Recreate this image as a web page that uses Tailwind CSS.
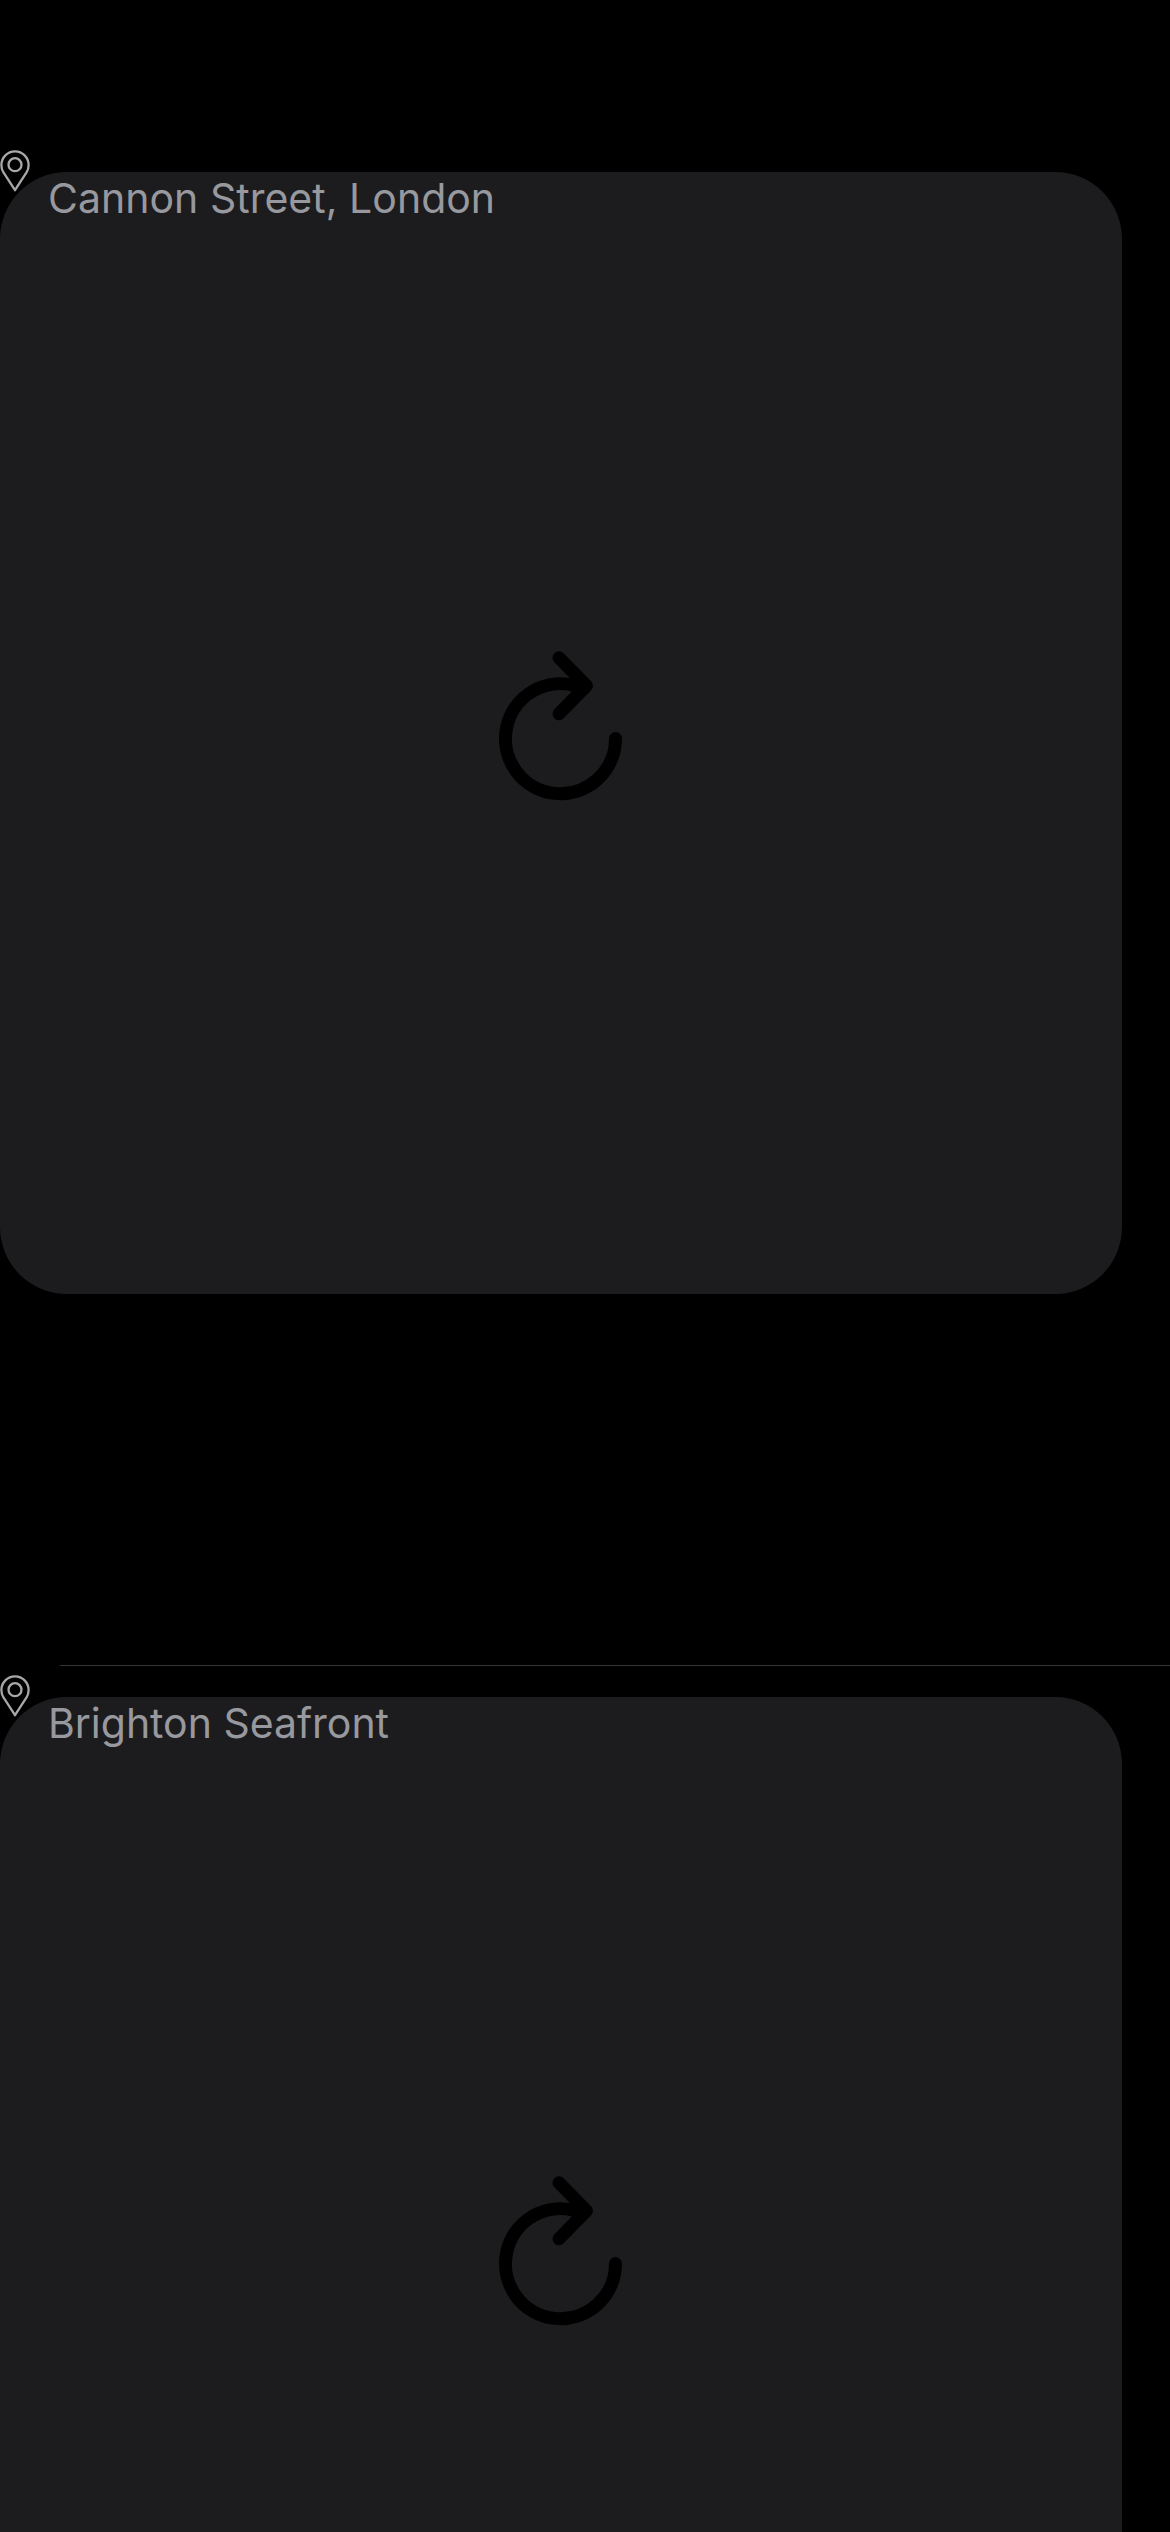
<!DOCTYPE html>
<html lang="en">
<head>
<meta charset="utf-8">
<title>Locations</title>
<script src="https://cdn.jsdelivr.net/npm/@tailwindcss/browser@4"></script>
</head>
<body class="bg-black font-['Inter',sans-serif]">
<svg class="hidden">
  <symbol id="pin" viewBox="0 0 30 42">
    <g fill="none" stroke="currentColor" stroke-width="2.3">
      <path d="M15 40.2 3.3 22.2C2 20.1 1.4 17.7 1.4 15a13.6 13.6 0 0 1 27.2 0c0 2.7-.6 5.1-1.9 7.2Z" stroke-linejoin="round"/>
      <circle cx="15" cy="14.7" r="6.5"/>
    </g>
  </symbol>
  <symbol id="reload" viewBox="0 0 124 150">
    <path d="M116.5 87.5A55 55 0 1 1 78 35.2M60 6.8l27.5 27.9L60 62.8" fill="none" stroke="currentColor" stroke-width="13" stroke-linecap="round" stroke-linejoin="round"/>
  </symbol>
</svg>
<ul class="h-[2532px] overflow-hidden pt-[140px]">
  <li class="relative h-[1525px] pt-8">
    <svg class="absolute left-0 top-[10px] h-[42px] w-[30px] text-[#a8a8a8]"><use href="#pin"/></svg>
    <article class="flex h-[1122px] w-[1122px] flex-col rounded-[67px] bg-[#1c1c1e]">
      <h2 class="h-[52px] pl-[48px] text-[41px] leading-[52px] tracking-[0.02px] text-[#98989f]">Cannon Street, London</h2>
      <div class="flex flex-1 justify-center pt-[427px]">
        <svg class="h-[150px] w-[124px] text-black"><use href="#reload"/></svg>
      </div>
    </article>
  </li>
  <li class="relative h-[1525px] pt-8">
    <div class="absolute left-[60px] right-0 top-0 h-px bg-[#363638]"></div>
    <svg class="absolute left-0 top-[10px] h-[42px] w-[30px] text-[#a8a8a8]"><use href="#pin"/></svg>
    <article class="flex h-[1122px] w-[1122px] flex-col rounded-[67px] bg-[#1c1c1e]">
      <h2 class="h-[52px] pl-[48px] text-[41px] leading-[52px] tracking-[-0.02px] text-[#98989f]">Brighton Seafront</h2>
      <div class="flex flex-1 justify-center pt-[427px]">
        <svg class="h-[150px] w-[124px] text-black"><use href="#reload"/></svg>
      </div>
    </article>
  </li>
</ul>
</body>
</html>
